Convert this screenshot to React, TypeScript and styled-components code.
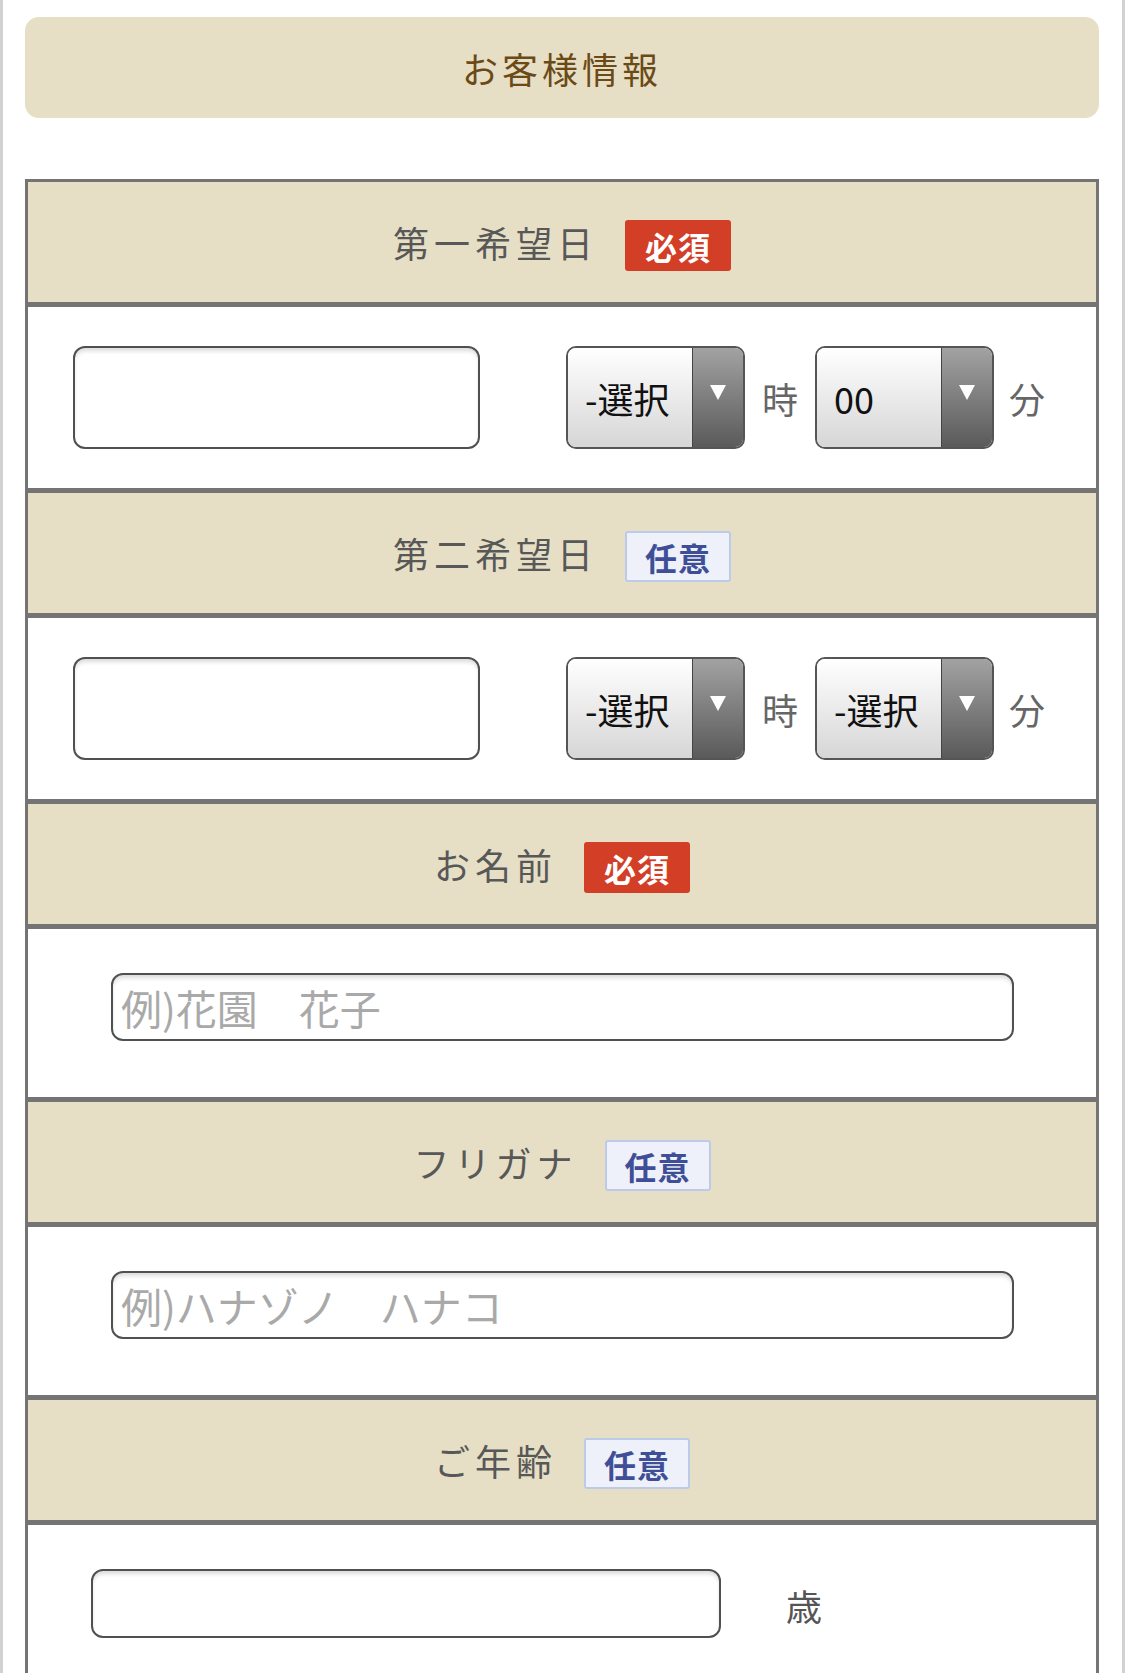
import React from "react";
import styled, { createGlobalStyle } from "styled-components";

const Global = createGlobalStyle`
  html, body { margin: 0; padding: 0; background: #fff; }
  body { font-family: "Noto Sans CJK JP", "Noto Sans", sans-serif; }
  * { box-sizing: border-box; }
`;

const Page = styled.div`
  width: 1125px;
  min-height: 1673px;
  border-left: 3px solid #d2d2d2;
  border-right: 3px solid #d2d2d2;
  padding: 17px 23px 0 22px;
  background: #fff;
`;

const Title = styled.h2`
  margin: 0;
  height: 101px;
  border-radius: 14px;
  background: #e6dfc5;
  color: #6b4a17;
  font-weight: 400;
  font-size: 36px;
  letter-spacing: 4px;
  display: flex;
  align-items: center;
  justify-content: center;
`;

const Form = styled.div`
  margin-top: 61px;
  border: 3px solid #747474;
  border-bottom: none;
`;

const Head = styled.div`
  height: 125px;
  background: #e6dfc5;
  border-bottom: 5px solid #747474;
  display: flex;
  align-items: center;
  justify-content: center;
  gap: 27px;
`;

const Label = styled.span`
  font-size: 36px;
  letter-spacing: 5px;
  color: #585858;
  font-weight: 400;
`;

const Badge = styled.span<{ $required?: boolean }>`
  width: 106px;
  height: 51px;
  margin-top: 7px;
  border-radius: 3px;
  display: flex;
  align-items: center;
  justify-content: center;
  font-size: 32px;
  font-weight: 700;
  letter-spacing: 1px;
  background: ${(p) => (p.$required ? "#d23e26" : "#eef1fa")};
  color: ${(p) => (p.$required ? "#fff" : "#3f4f97")};
  border: ${(p) => (p.$required ? "none" : "2px solid #bccbe9")};
`;

const DateRow = styled.div`
  height: 186px;
  border-bottom: 5px solid #747474;
  display: flex;
  align-items: center;
  padding-left: 45px;
`;

const TextRow = styled.div<{ $pad: number }>`
  height: 173px;
  border-bottom: 5px solid #747474;
  display: flex;
  align-items: flex-start;
  padding-top: 44px;
  padding-left: ${(p) => p.$pad}px;
`;

const TextInput = styled.input<{ $w: number; $h: number }>`
  width: ${(p) => p.$w}px;
  height: ${(p) => p.$h}px;
  border: 2px solid #505050;
  border-radius: 12px;
  background: #fff;
  box-shadow: inset 0 4px 4px -1px rgba(0, 0, 0, 0.14);
  padding: 0 8px;
  font-family: "Noto Sans CJK JP", "Noto Sans", sans-serif;
  font-size: 41px;
  color: #333;
  outline: none;
  &::placeholder {
    color: #a9a9a9;
  }
`;

const Select = styled.div<{ $gap: number }>`
  margin-left: ${(p) => p.$gap}px;
  width: 179px;
  height: 103px;
  border: 2px solid #555;
  border-radius: 10px;
  overflow: hidden;
  display: flex;
`;

const SelectValue = styled.div`
  flex: 1;
  display: flex;
  align-items: center;
  padding-left: 17px;
  background: linear-gradient(#ffffff, #d6d6d6);
  font-size: 36px;
  color: #111;
`;

const SelectArrow = styled.div`
  width: 51px;
  border-left: 1px solid #444;
  background: linear-gradient(#a2a2a2, #5a5a5a);
  display: flex;
  justify-content: center;
  padding-top: 37px;
  &::before {
    content: "";
    width: 0;
    height: 0;
    border-left: 8px solid transparent;
    border-right: 8px solid transparent;
    border-top: 15px solid #fff;
  }
`;

const Unit = styled.span<{ $gap: number }>`
  margin-left: ${(p) => p.$gap}px;
  font-size: 36px;
  color: #666;
  line-height: 1;
`;

const AgeUnit = styled.span`
  margin-left: 65px;
  margin-top: 18px;
  font-size: 36px;
  color: #555;
  line-height: 1;
`;

const Section = ({
  label,
  required,
}: {
  label: string;
  required?: boolean;
}) => (
  <Head>
    <Label>{label}</Label>
    <Badge $required={required}>{required ? "必須" : "任意"}</Badge>
  </Head>
);

const DateField = ({ minute }: { minute: string }) => (
  <DateRow>
    <TextInput $w={407} $h={103} type="text" />
    <Select $gap={86}>
      <SelectValue>-選択</SelectValue>
      <SelectArrow />
    </Select>
    <Unit $gap={17}>時</Unit>
    <Select $gap={17}>
      <SelectValue>{minute}</SelectValue>
      <SelectArrow />
    </Select>
    <Unit $gap={15}>分</Unit>
  </DateRow>
);

export default function App() {
  return (
    <>
      <Global />
      <Page>
        <Title>お客様情報</Title>
        <Form>
          <Section label="第一希望日" required />
          <DateField minute="00" />
          <Section label="第二希望日" />
          <DateField minute="-選択" />
          <Section label="お名前" required />
          <TextRow $pad={83}>
            <TextInput $w={903} $h={68} placeholder="例)花園　花子" />
          </TextRow>
          <Section label="フリガナ" />
          <TextRow $pad={83}>
            <TextInput $w={903} $h={68} placeholder="例)ハナゾノ　ハナコ" />
          </TextRow>
          <Section label="ご年齢" />
          <TextRow $pad={63}>
            <TextInput $w={630} $h={69} type="text" />
            <AgeUnit>歳</AgeUnit>
          </TextRow>
        </Form>
      </Page>
    </>
  );
}
